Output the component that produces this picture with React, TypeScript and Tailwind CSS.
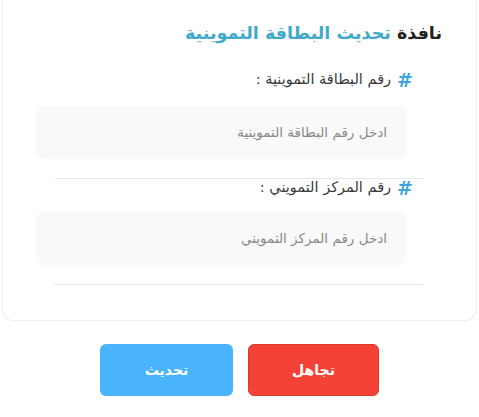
import React from 'react'

const Label = ({ text, className }: { text: string; className: string }) => (
  <div className={`flex items-center gap-[6px] mr-[63px] ${className}`}>
    <span className="text-[#3ea6dc] text-[19px] font-bold leading-none">#</span>
    <span className="text-[14.5px] text-[#3a3a3a]">{text}</span>
  </div>
)

const Input = ({ placeholder, className }: { placeholder: string; className: string }) => (
  <div className={`mr-[69px] w-[371px] h-[53px] rounded-lg bg-[#f9f9f9] flex items-center pr-[20px] text-[13.5px] text-[#8a8a8a] ${className}`}>
    {placeholder}
  </div>
)

export default function App() {
  return (
    <div dir="rtl" className="w-[479px] h-[417px] bg-white px-[2px]" style={{ fontFamily: '"DejaVu Sans", "Noto Sans", sans-serif' }}>
      {/* card */}
      <div className="h-[321px] border-x border-b border-[#eeeeee] rounded-b-xl bg-white">
        <div className="h-[70px] pt-[21px] mr-[34px] text-[17.5px] font-bold leading-[24px]">
          <span className="text-[#222]">نافذة </span>
          <span className="text-[#41a9c9]">تحديث البطاقة التموينية</span>
        </div>
        <Label text="رقم البطاقة التموينية :" className="h-[20px]" />
        <Input placeholder="ادخل رقم البطاقة التموينية" className="mt-[16px]" />
        <div className="mt-[19px] mr-[52px] w-[369px] h-px bg-[#e6e6e6]" />
        <Label text="رقم المركز التمويني :" className="h-[18px]" />
        <Input placeholder="ادخل رقم المركز التمويني" className="mt-[15px]" />
        <div className="mt-[19px] mr-[53px] w-[369px] h-px bg-[#e6e6e6]" />
      </div>
      {/* actions */}
      <div className="flex justify-center gap-[15px] mt-[23px]">
        <button className="w-[131px] h-[52px] rounded-md bg-[#f44336] border border-[#d9382d] text-white text-[14px] font-bold">
          تجاهل
        </button>
        <button className="w-[133px] h-[52px] rounded-md bg-[#4ab4fa] text-white text-[14px] font-bold">
          تحديث
        </button>
      </div>
    </div>
  )
}
